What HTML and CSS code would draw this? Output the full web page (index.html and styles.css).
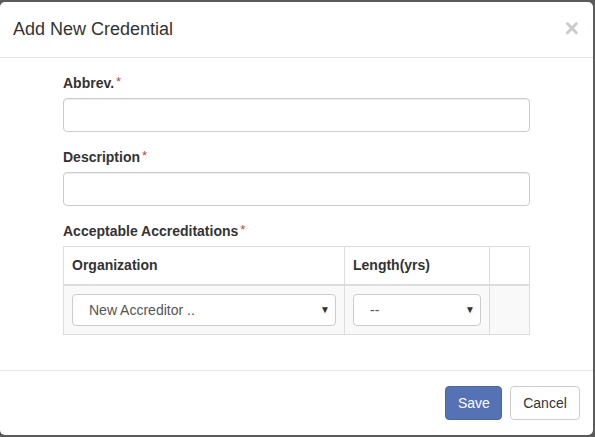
FILE: index.html
```html
<!DOCTYPE html>
<html>
<head>
<meta charset="utf-8">
<link rel="stylesheet" href="styles.css">
</head>
<body>
<div class="modal">
  <div class="modal-header">
    <h4 class="modal-title">Add New Credential</h4>
    <button class="close" type="button">×</button>
  </div>
  <div class="modal-body">
    <div class="form-group">
      <label class="lbl">Abbrev.<span class="req">*</span></label>
      <input class="form-control" type="text">
    </div>
    <div class="form-group">
      <label class="lbl">Description<span class="req">*</span></label>
      <input class="form-control" type="text">
    </div>
    <div class="form-group">
      <label class="lbl">Acceptable Accreditations<span class="req">*</span></label>
      <table class="tbl">
        <thead>
          <tr><th class="c-org">Organization</th><th class="c-len">Length(yrs)</th><th class="c-act"></th></tr>
        </thead>
        <tbody>
          <tr>
            <td><div class="sel"><span class="sel-text">New Accreditor ..</span><span class="caret">▼</span></div></td>
            <td><div class="sel"><span class="sel-text">--</span><span class="caret">▼</span></div></td>
            <td></td>
          </tr>
        </tbody>
      </table>
    </div>
  </div>
  <div class="modal-footer">
    <button class="btn btn-primary" type="button">Save</button>
    <button class="btn btn-default" type="button">Cancel</button>
  </div>
</div>
</body>
</html>
```
FILE: styles.css
```css
* { box-sizing: border-box; }
html, body { margin: 0; padding: 0; }
body {
  background: #5b5b5b;
  font-family: "Liberation Sans", Arial, sans-serif;
  font-size: 14px;
  line-height: 20px;
  color: #333;
  width: 595px;
  height: 437px;
  overflow: hidden;
}
.modal {
  margin-top: 2px;
  width: 593px;
  background: #fff;
  border-radius: 5px;
}
.modal-header {
  display: flex;
  justify-content: space-between;
  align-items: flex-start;
  padding: 14px 14px 15px 13px;
  border-bottom: 1px solid #e5e5e5;
}
.modal-title {
  margin: 0;
  font-size: 18px;
  font-weight: normal;
  line-height: 26px;
  color: #333;
}
.close {
  background: none;
  border: 0;
  padding: 0;
  margin-top: 1px;
  font-family: "Liberation Sans", Arial, sans-serif;
  font-size: 25px;
  font-weight: bold;
  line-height: 22px;
  color: #000;
  opacity: 0.2;
}
.modal-body {
  padding: 15px 63px 35px 63px;
}
.form-group { margin-bottom: 15px; }
.form-group:last-child { margin-bottom: 0; }
.lbl {
  display: block;
  font-weight: bold;
  margin-bottom: 5px;
  line-height: 20px;
}
.req {
  color: #b94a48;
  font-weight: normal;
  font-size: 13px;
  margin-left: 2px;
  vertical-align: top;
  position: relative;
  top: -1px;
}
.form-control {
  display: block;
  width: 100%;
  height: 34px;
  border: 1px solid #ccc;
  border-radius: 4px;
  box-shadow: inset 0 1px 1px rgba(0,0,0,.075);
  padding: 6px 12px;
  font: inherit;
  margin: 0;
}
.tbl {
  width: 100%;
  border-collapse: collapse;
  border: 1px solid #ddd;
}
.tbl th, .tbl td {
  border: 1px solid #ddd;
  padding: 8px;
  text-align: left;
  vertical-align: top;
}
.tbl th {
  border-bottom: 2px solid #ddd;
  line-height: 20px;
  height: 38px;
}
.tbl tbody tr { background: #f9f9f9; }
.c-org { width: 281px; }
.c-len { width: 145px; }
.sel {
  display: flex;
  align-items: center;
  justify-content: space-between;
  height: 32px;
  background: #fff;
  border: 1px solid #ccc;
  border-radius: 4px;
  padding: 0 5px 0 16px;
  color: #555;
}
.sel-text { line-height: 20px; }
.caret {
  font-size: 10px;
  color: #333;
  line-height: 10px;
}
.modal-footer {
  display: flex;
  justify-content: flex-end;
  gap: 8px;
  padding: 15px 13px 15px 15px;
  border-top: 1px solid #e5e5e5;
}
.btn {
  height: 34px;
  padding: 6px 12px;
  font-family: "Liberation Sans", Arial, sans-serif;
  font-size: 14px;
  line-height: 20px;
  border-radius: 4px;
  border: 1px solid transparent;
  margin: 0;
}
.btn-primary {
  width: 57px;
  background: #5572b5;
  border-color: #4a66a8;
  color: #fff;
}
.btn-default {
  width: 70px;
  background: #fff;
  border-color: #ccc;
  color: #333;
}
```
